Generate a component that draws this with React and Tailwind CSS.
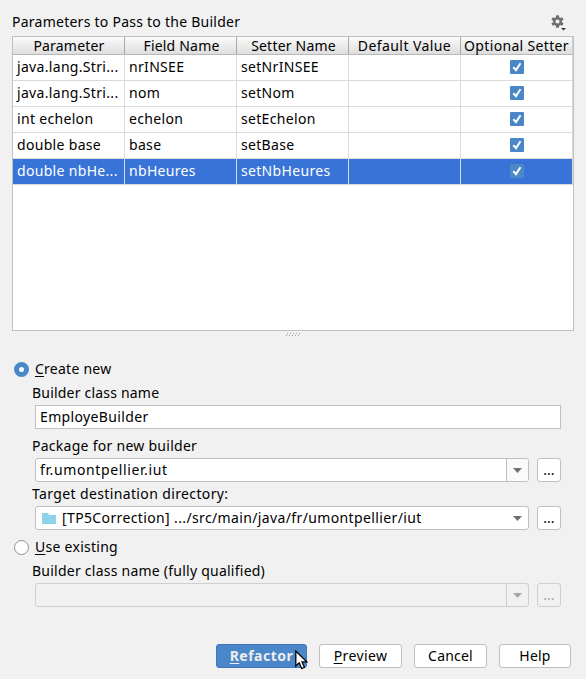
import React from "react";

const rows = [
  ["java.lang.Stri...", "nrINSEE", "setNrINSEE"],
  ["java.lang.Stri...", "nom", "setNom"],
  ["int echelon", "echelon", "setEchelon"],
  ["double base", "base", "setBase"],
  ["double nbHe...", "nbHeures", "setNbHeures"],
];

const headers = [
  { name: "Parameter", spacing: "tracking-[0.2px] pl-px" },
  { name: "Field Name", spacing: "tracking-[0.2px] pl-[2px]" },
  { name: "Setter Name", spacing: "tracking-[0.2px] pl-[2px]" },
  { name: "Default Value", spacing: "tracking-[0.42px]" },
  { name: "Optional Setter", spacing: "tracking-[0.33px]" },
];

function Check({ selected }) {
  return (
    <svg className="block h-[14px] w-[14px]" viewBox="0 0 14 14">
      <rect width="14" height="14" rx="1" fill={selected ? "#4d89c6" : "#4a87c9"} />
      <path d="M3.3 7.200 6 10.100 10.500 3.300" fill="none" stroke="#fff" strokeWidth="2" />
    </svg>
  );
}

function Arrow({ color }) {
  return (
    <svg className="block h-[5px] w-[9px]" viewBox="0 0 9 5">
      <path d="M0 0H9L4.5 5Z" fill={color} />
    </svg>
  );
}

function Gear() {
  return (
    <svg className="block h-4 w-4" viewBox="0 0 16 16">
      <g transform="translate(6.5 6.500)" fill="#6e6e6e">
        <path
          fillRule="evenodd"
          d="M0-4.500A4.500 4.500 0 0 1 0 4.500A4.500 4.500 0 0 1 0-4.500ZM0-2.100A2.100 2.100 0 0 0 0 2.100A2.100 2.100 0 0 0 0-2.100Z"
        />
        {[0, 60, 120, 180, 240, 300].map((a) => (
          <path key={a} d="M-1.400-6.200H1.400L1.700-3.800H-1.700Z" transform={`rotate(${a})`} />
        ))}
      </g>
      <path d="M10 13H15L12.500 15.500Z" fill="#333" />
    </svg>
  );
}

function Browse({ disabled }) {
  return (
    <button
      className={
        "ml-2 flex h-6 w-6 items-center justify-center rounded-[3px] border " +
        (disabled ? "border-[#cfcfcf] text-[#a5a5a5]" : "border-[#c0c0c0] bg-white")
      }
    >
      <span className="leading-[18px]">...</span>
    </button>
  );
}

export default function App() {
  return (
    <div className="flex h-[679px] w-[586px] flex-col bg-[#f1f1f1] pl-3 font-['Noto_Sans',sans-serif] text-[14px] leading-5 whitespace-pre text-black">
      <div className="flex h-9 items-start justify-between pt-3 pr-[19px]">
        <span className="tracking-[0.25px]">Parameters to Pass to the Builder</span>
        <div className="pt-[3px]"><Gear /></div>
      </div>

      <div className="h-[295px] w-[562px] border border-[#c0c0c0] bg-white">
        <div className="flex h-[18px] border-b border-[#b8b8b8] bg-linear-to-b from-[#fbfbfb] to-[#dedede]">
          {headers.map((h) => (
            <div key={h.name} className="flex w-28 justify-center border-r border-[#a8a8a8] leading-[17px] last:border-[#d0d0d0]">
              <span className={h.spacing}>{h.name}</span>
            </div>
          ))}
        </div>
        {rows.map((r, i) => (
          <div
            key={i}
            className={"flex h-[26px] border-b border-[#dadada] tracking-[0.32px] " + (i === 4 ? "bg-[#3874d8] text-white" : "")}
          >
            {r.map((c, j) => (
              <div key={j} className="w-28 border-r border-[#dadada] pl-1 leading-[24px]">{c}</div>
            ))}
            <div className="w-28 border-r border-[#dadada]" />
            <div className="flex w-28 justify-center border-r border-[#dadada] pt-[5px]">
              <Check selected={i === 4} />
            </div>
          </div>
        ))}
      </div>

      <div className="flex h-[29px] w-[562px] justify-center pt-[2px]">
        <svg className="block h-[4px] w-[16px]" viewBox="0 0 16 4" shapeRendering="crispEdges">
          {[0, 1, 2, 3, 4].map((i) => (
            <g key={i} fill="#a0a0a0">
              <rect x={i * 3 + 2} y="0" width="1" height="1" />
              <rect x={i * 3 + 1} y="2" width="1" height="1" />
            </g>
          ))}
        </svg>
      </div>

      <div className="flex h-[23px] items-start pl-[2px]">
        <div className="mt-[2px] flex h-[15px] w-[15px] items-center justify-center rounded-full bg-[#4a87c9]">
          <div className="h-[5px] w-[5px] rounded-full bg-white" />
        </div>
        <span className="ml-[6px] leading-[18px] tracking-[0.25px]"><u className="underline-offset-2">C</u>reate new</span>
      </div>
      <div className="h-[22px] pl-5 tracking-[0.2px]">Builder class name</div>
      <div className="ml-[23px] h-6 w-[526px] border border-[#c0c0c0] bg-white pl-1 leading-[22px] tracking-[0.36px]">EmployeBuilder</div>

      <div className="h-[29px] pt-[7px] pl-5 tracking-[0.27px]">Package for new builder</div>
      <div className="ml-[23px] flex h-6">
        <div className="flex w-[494px] rounded-[3px] border border-[#c0c0c0] bg-white">
          <div className="flex-1 pl-1 leading-[22px] tracking-[0.62px]">fr.umontpellier.iut</div>
          <div className="flex w-[22px] items-center justify-center rounded-r-[2px] border-l border-[#c0c0c0] bg-[#fafafa]"><Arrow color="#6e6e6e" /></div>
        </div>
        <Browse />
      </div>

      <div className="h-6 pt-[2px] pl-5 tracking-[0.37px]">Target destination directory:</div>
      <div className="ml-[23px] flex h-6">
        <div className="flex w-[494px] items-center rounded-[3px] border border-[#c0c0c0] bg-white">
          <svg className="ml-[6px] block h-[11px] w-[14px]" viewBox="0 0 14 11">
            <path d="M0 0H5.500L7.500 2H14V11H0Z" fill="#8fd3ea" />
          </svg>
          <div className="flex-1 pl-[6px] leading-[22px] tracking-[0.37px]">[TP5Correction] .../src/main/java/fr/umontpellier/iut</div>
          <div className="flex w-[21px] justify-center"><Arrow color="#6e6e6e" /></div>
        </div>
        <Browse />
      </div>

      <div className="flex h-[31px] items-start pt-[8px] pl-[2px]">
        <div className="mt-[2px] h-[15px] w-[15px] rounded-full border border-[#919191] bg-white" />
        <span className="ml-[6px] leading-[18px] tracking-[0.27px]"><u className="underline-offset-2">U</u>se existing</span>
      </div>
      <div className="h-[22px] pl-5 tracking-[0.24px]">Builder class name (fully qualified)</div>
      <div className="ml-[23px] flex h-6">
        <div className="flex w-[494px] justify-end rounded-[3px] border border-[#cfcfcf]">
          <div className="flex w-[22px] items-center justify-center border-l border-[#cfcfcf]"><Arrow color="#a8a8a8" /></div>
        </div>
        <Browse disabled />
      </div>

      <div className="mt-[37px] ml-[204px] flex h-6 gap-3 leading-[22px]">
        <button className="relative w-[91px] rounded-[3px] border border-[#3f76bd] bg-[#4a87c9] font-bold tracking-[0.5px] text-[#eee]">
          <u className="underline-offset-2">R</u>efactor
          <svg className="absolute top-[5px] left-[78px] h-5 w-[14px]" viewBox="0 0 14 20">
            <path d="M.8 1V16L4.200 12.800 6.700 18.500 9.400 17.300 7 11.900H11.800Z" fill="#fff" stroke="#000" strokeWidth="1.300" />
          </svg>
        </button>
        <button className="w-[83px] rounded-[3px] border border-[#c0c0c0] bg-white tracking-[0.4px]"><u className="underline-offset-2">P</u>review</button>
        <button className="w-[73px] rounded-[3px] border border-[#c0c0c0] bg-white tracking-[0.2px]">Cancel</button>
        <button className="w-[72px] rounded-[3px] border border-[#c0c0c0] bg-white tracking-[0.2px]">Help</button>
      </div>
    </div>
  );
}
